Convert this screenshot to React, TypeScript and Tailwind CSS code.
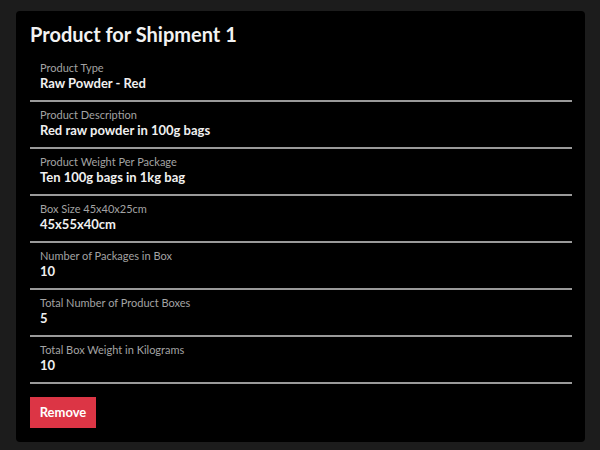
const fields = [
  { label: 'Product Type', value: 'Raw Powder - Red' },
  { label: 'Product Description', value: 'Red raw powder in 100g bags' },
  { label: 'Product Weight Per Package', value: 'Ten 100g bags in 1kg bag' },
  { label: 'Box Size 45x40x25cm', value: '45x55x40cm' },
  { label: 'Number of Packages in Box', value: '10' },
  { label: 'Total Number of Product Boxes', value: '5' },
  { label: 'Total Box Weight in Kilograms', value: '10' },
];

function App() {
  return (
    <div className="min-h-screen w-full bg-[#1c1c1c] pt-[11px] pl-4 pr-[15px] font-['Lato',sans-serif]">
      <div className="bg-black rounded-[4px] px-[14px] pr-[13px] pt-[9px] pb-[14px]">
        {/* Header */}
        <h1 className="h-[28px] leading-[28px] text-[20px] font-bold text-[#f2f2f2] mb-[7px]">
          Product for Shipment 1
        </h1>

        {/* Fields */}
        <div>
          {fields.map((f) => (
            <div key={f.label} className="pl-[10px] pt-[6px] pb-[9px] border-b-2 border-[#9a9a9a]">
              <div className="h-[14px] leading-[14px] text-[11px] text-[#a3a3a3]">{f.label}</div>
              <div className="h-[16px] leading-[16px] text-[13px] font-bold text-[#f0f0f0]">{f.value}</div>
            </div>
          ))}
        </div>

        {/* Actions */}
        <button className="mt-[13px] h-[31px] w-[66px] bg-[#dc3545] text-white text-[13px] font-bold">
          Remove
        </button>
      </div>
    </div>
  );
}

export default App;
